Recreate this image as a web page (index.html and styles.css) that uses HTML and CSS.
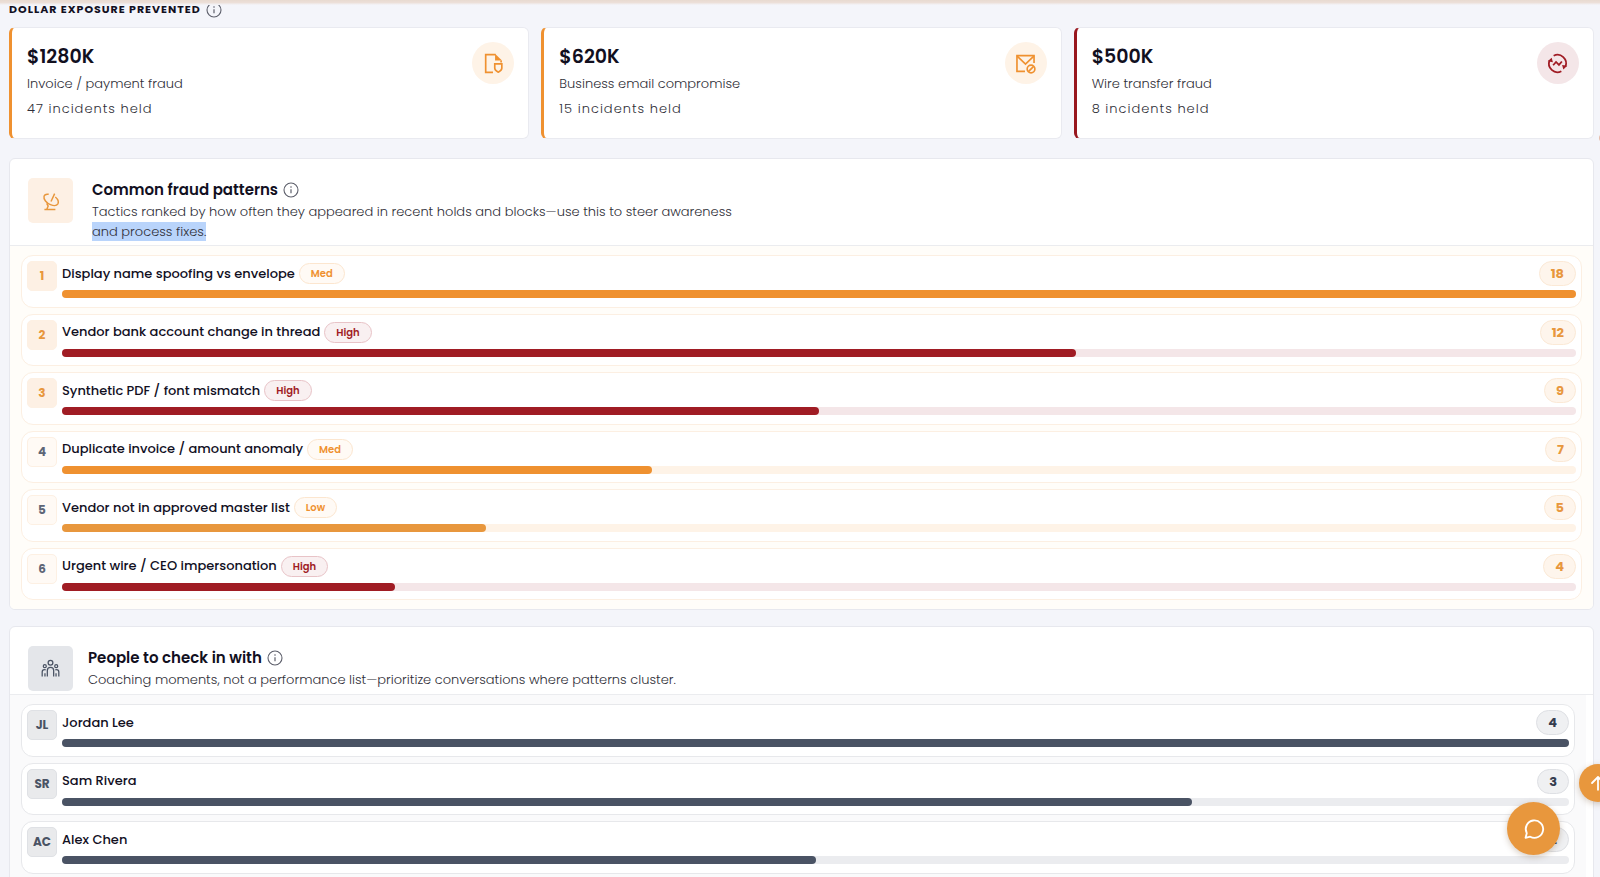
FILE: index.html
```html
<!DOCTYPE html>
<html lang="en">
<head>
<meta charset="utf-8">
<meta name="viewport" content="width=device-width, initial-scale=1">
<title>Fraud exposure</title>
<link rel="stylesheet" href="styles.css">
</head>
<body>
<svg class="sprite" aria-hidden="true">
  <symbol id="info" viewBox="0 0 16 16"><circle cx="8" cy="8" r="7" fill="none" stroke="currentColor" stroke-width="1.1"/><path d="M8 7.200v4" stroke="currentColor" stroke-width="1.200"/><circle cx="8" cy="5" r=".8" fill="currentColor"/></symbol>
</svg>
<div class="top-strip"></div>
<main class="page">
  <section class="exposure">
    <div class="heading-row">
      <h2 class="eyebrow">Dollar exposure prevented</h2>
      <button class="info" type="button" aria-label="About dollar exposure"><svg><use href="#info"/></svg></button>
    </div>
    <div class="cards">
      <article class="card">
        <div>
          <p class="amount">$1280K</p>
          <p class="label">Invoice / payment fraud</p>
          <p class="held">47 incidents held</p>
        </div>
        <span class="disc"><svg viewBox="0 0 24 24" fill="none" stroke="currentColor" stroke-width="1.6"><path d="M11.500 20.500H4.500v-17h9.500M19.300 9v2"/><path d="M13.500 2.700l6.600 6.500h-6.600z" fill="currentColor" stroke="none"/><path d="M13.200 12.300h6.800v4.300c0 1.700-1.500 2.800-3.400 3.700-1.900-.9-3.400-2-3.400-3.700z"/></svg></span>
      </article>
      <article class="card">
        <div>
          <p class="amount">$620K</p>
          <p class="label">Business email compromise</p>
          <p class="held">15 incidents held</p>
        </div>
        <span class="disc"><svg viewBox="0 0 24 24" fill="none" stroke="currentColor" stroke-width="1.6"><path d="M11.500 19.500H3.800v-15h16.400v7"/><path d="M4 5l8 7.500L20 5"/><circle cx="17.300" cy="17.300" r="3.700"/><path d="M14.800 19.800l5-5"/></svg></span>
      </article>
      <article class="card card-high">
        <div>
          <p class="amount">$500K</p>
          <p class="label">Wire transfer fraud</p>
          <p class="held">8 incidents held</p>
        </div>
        <span class="disc"><svg viewBox="0 0 24 24" fill="none" stroke="currentColor" stroke-width="1.7"><path d="M8.300 4.600A8.200 8.200 0 0 1 19.600 15"/><path d="M15.700 19.400A8.200 8.200 0 0 1 4.400 9"/><path d="M2.600 9.800l3.800-3.400 1.200 4.400zM21.400 14.200l-3.800 3.600-1.200-4.400z" fill="currentColor" stroke="none"/><path d="M7.800 13.700l2.800-3.200 2.800 2.800 2.800-3.200"/></svg></span>
      </article>
    </div>
  </section>

  <section class="panel patterns">
    <header class="panel-head">
      <span class="tile"><svg viewBox="0 0 24 24" fill="none" stroke="currentColor" stroke-width="1.6"><path d="M9.500 4.700C7 4.200 4.900 5 4.400 7c-.8 3 2.600 7.300 7 9 3.500 1.400 7 1 8.100-.9 1-1.900.2-4.900-2.800-7.500"/><path d="M12 12.500l4-8.500"/><path d="M7.300 14.500l1.600 3-1.600 3.800M4.800 21.200h12"/></svg></span>
      <div class="intro">
        <div class="heading-row"><h2 class="title">Common fraud patterns</h2><button class="info" type="button" aria-label="About common fraud patterns"><svg><use href="#info"/></svg></button></div>
        <p class="desc">Tactics ranked by how often they appeared in recent holds and blocks—use this to steer awareness <mark>and process fixes.</mark></p>
      </div>
    </header>
    <ol class="list list-six">
      <li class="row top"><span class="rank">1</span><div class="body"><div class="line"><h3 class="name">Display name spoofing vs envelope</h3><span class="chip">Med</span><span class="count">18</span></div><div class="track"><div class="fill" style="width:100%"></div></div></div></li>
      <li class="row top high"><span class="rank">2</span><div class="body"><div class="line"><h3 class="name">Vendor bank account change in thread</h3><span class="chip">High</span><span class="count">12</span></div><div class="track"><div class="fill" style="width:67%"></div></div></div></li>
      <li class="row top high"><span class="rank">3</span><div class="body"><div class="line"><h3 class="name">Synthetic PDF / font mismatch</h3><span class="chip">High</span><span class="count">9</span></div><div class="track"><div class="fill" style="width:50%"></div></div></div></li>
      <li class="row"><span class="rank">4</span><div class="body"><div class="line"><h3 class="name">Duplicate invoice / amount anomaly</h3><span class="chip">Med</span><span class="count">7</span></div><div class="track"><div class="fill" style="width:39%"></div></div></div></li>
      <li class="row low"><span class="rank">5</span><div class="body"><div class="line"><h3 class="name">Vendor not in approved master list</h3><span class="chip">Low</span><span class="count">5</span></div><div class="track"><div class="fill" style="width:28%"></div></div></div></li>
      <li class="row high"><span class="rank">6</span><div class="body"><div class="line"><h3 class="name">Urgent wire / CEO impersonation</h3><span class="chip">High</span><span class="count">4</span></div><div class="track"><div class="fill" style="width:22%"></div></div></div></li>
    </ol>
  </section>

  <section class="panel people">
    <header class="panel-head">
      <span class="tile"><svg viewBox="0 0 24 24" fill="none" stroke="currentColor" stroke-width="1.6"><circle cx="12" cy="4.800" r="3"/><circle cx="4.800" cy="9" r="1.900"/><circle cx="19.200" cy="9" r="1.900"/><path d="M8 22v-7.500c0-2.300 1.700-3.800 4-3.800s4 1.500 4 3.800V22M1.500 22v-5.500c0-1.900 1.100-3 2.800-3 .8 0 1.300.2 1.700.5M5 22v-4M22.500 22v-5.500c0-1.900-1.100-3-2.800-3-.8 0-1.300.2-1.700.5M19 22v-4"/></svg></span>
      <div class="intro">
        <div class="heading-row"><h2 class="title">People to check in with</h2><button class="info" type="button" aria-label="About people to check in with"><svg><use href="#info"/></svg></button></div>
        <p class="desc">Coaching moments, not a performance list—prioritize conversations where patterns cluster.</p>
      </div>
    </header>
    <ul class="list list-three">
      <li class="row"><span class="rank">JL</span><div class="body"><div class="line"><h3 class="name">Jordan Lee</h3><span class="count">4</span></div><div class="track"><div class="fill" style="width:100%"></div></div></div></li>
      <li class="row"><span class="rank">SR</span><div class="body"><div class="line"><h3 class="name">Sam Rivera</h3><span class="count">3</span></div><div class="track"><div class="fill" style="width:75%"></div></div></div></li>
      <li class="row"><span class="rank">AC</span><div class="body"><div class="line"><h3 class="name">Alex Chen</h3><span class="count">2</span></div><div class="track"><div class="fill" style="width:50%"></div></div></div></li>
    </ul>
  </section>
</main>
<span class="edge-dot"></span>
<button class="float to-top" type="button" aria-label="Back to top"><svg viewBox="0 0 24 24" fill="none" stroke="currentColor" stroke-width="2.400" stroke-linecap="round" stroke-linejoin="round"><path d="M12 21V4M4 12l8-8 8 8"/></svg></button>
<button class="float chat" type="button" aria-label="Open chat"><svg viewBox="0 0 24 24" fill="none" stroke="currentColor" stroke-width="2" stroke-linejoin="round"><path d="M2.800 21.600l1.300-5A9.500 9.500 0 1 1 7.800 20.400z"/></svg></button>
</body>
</html>
```
FILE: styles.css
```css
* { box-sizing: border-box; }

:root {
  --ink: #12101f;
  --muted: #2f2f38;
  --slate: #4a5364;
  --accent: #e8973d;
  --accent-bar: #ef9130;
  --accent-soft: #fef3e7;
  --high: #a01c24;
  --high-soft: #f4e6e8;
}

body {
  margin: 0;
  height: 100vh;
  overflow: hidden;
  background: #f4f5fa;
  color: var(--ink);
  font-family: Poppins, "Open Sans", "Noto Sans", sans-serif;
  font-size: 13px;
  line-height: 20px;
}

h2, h3, p, ol, ul { margin: 0; padding: 0; }
ol, ul { list-style: none; }
button { border: 0; padding: 0; background: none; cursor: pointer; }
svg { display: block; }
.sprite { display: none; }

.top-strip {
  position: fixed;
  inset: 0 0 auto;
  height: 5px;
  background: linear-gradient(#e8dad0, #ecdfd8 50%, #f4f5fa);
}

.page { padding: 0 6px 0 9px; }

.heading-row { display: flex; align-items: center; gap: 5px; }
.info { color: #5d5f6b; }
.info svg { width: 16px; height: 16px; }

.eyebrow {
  font-size: 11px;
  font-weight: 700;
  letter-spacing: 1px;
  line-height: 19px;
  text-transform: uppercase;
}

.cards {
  display: grid;
  grid-template-columns: repeat(3, 1fr);
  gap: 12px;
  margin-top: 8px;
}

.card {
  display: flex;
  justify-content: space-between;
  align-items: flex-start;
  padding: 14px 14px 14px 15px;
  background: #fff;
  border: 1px solid #e9eaf0;
  border-left: 3px solid var(--accent-bar);
  border-radius: 6px;
  min-height: 112px;
}
.card-high { border-left-color: #98171e; }

.amount { font-size: 19px; font-weight: 600; line-height: 30px; }
.label, .held { color: var(--muted); font-weight: 300; }
.label { line-height: 24px; }
.held { line-height: 26px; letter-spacing: 1px; }

.disc {
  display: grid;
  place-items: center;
  width: 42px;
  height: 42px;
  border-radius: 50%;
  background: var(--accent-soft);
  color: var(--accent-bar);
}
.card-high .disc { background: var(--high-soft); color: var(--high); }
.disc svg { width: 25px; height: 25px; }

.panel {
  margin-top: 19px;
  background: #fff;
  border: 1px solid #e7e8ee;
  border-radius: 6px;
  overflow: hidden;
}
.people { margin-top: 16px; margin-bottom: -20px; }

.panel-head {
  display: flex;
  align-items: flex-start;
  gap: 19px;
  padding: 19px 18px 3px;
  border-bottom: 1px solid #ebecef;
}
.people .panel-head { gap: 15px; }

.tile {
  display: grid;
  place-items: center;
  flex: none;
  width: 45px;
  height: 45px;
  border-radius: 5px;
  background: #fdf0e4;
  color: var(--accent);
}
.tile svg { width: 22px; height: 22px; }
.people .tile { background: #e4e6ea; color: var(--slate); }
.people .tile svg { width: 19px; height: 19px; }

.intro { max-width: 655px; }
.title { font-size: 15px; font-weight: 600; line-height: 24px; }
.desc { color: var(--muted); font-weight: 300; }
mark { background: #b9d4fb; color: inherit; }

.list {
  display: grid;
  grid-auto-rows: 1fr;
  gap: 6px;
  box-sizing: content-box;
  padding: 9px 11px;
  background: #fffdf9;
}
.list-six { min-height: 345px; }
.list-three {
  min-height: 170px;
  padding-bottom: 24px;
  background: #fafafb;
  border-right: 7px solid #fff;
}

.row {
  display: flex;
  gap: 5px;
  padding: 5px 5px 8px;
  background: #fff;
  border: 1px solid #fcefe2;
  border-radius: 12px;
}

.rank {
  display: grid;
  place-items: center;
  flex: none;
  width: 30px;
  height: 30px;
  border: 1px solid #fdf0e3;
  border-radius: 5px;
  background: #fffaf5;
  color: #5d6576;
  font-size: 12px;
  font-weight: 700;
}
.top .rank { background: #fdf0e4; color: var(--accent); }

.body { flex: 1; min-width: 0; }
.line { display: flex; align-items: center; gap: 4px; height: 25px; }
.name { font-size: 13px; font-weight: 500; }

.chip {
  padding: 0 11px;
  border: 1px solid #fce6cf;
  border-radius: 11px;
  background: #fffaf5;
  color: var(--accent-bar);
  font-size: 10px;
  font-weight: 600;
  line-height: 19px;
}
.high .chip { border-color: #e8c3c7; background: #f9f0f1; color: var(--high); }

.count {
  margin-left: auto;
  padding: 0 11px;
  border: 1px solid #fbe9d6;
  border-radius: 13px;
  background: #fef5ec;
  color: var(--accent);
  font-size: 13px;
  font-weight: 700;
  line-height: 23px;
}

.track { height: 8px; margin-top: 4px; border-radius: 4px; background: var(--accent-soft); }
.fill { height: 100%; border-radius: 4px; background: var(--accent-bar); }
.low .fill { background: var(--accent); }
.high .track { background: var(--high-soft); }
.high .fill { background: var(--high); }

.people .row { border-color: #e7e8eb; }
.people .rank { border-color: #dfe1e5; background: #e9eaec; color: var(--slate); }
.people .count { border-color: #dee0e4; background: #eff0f2; color: #343c4f; }
.people .track { background: #ebecef; }
.people .fill { background: var(--slate); }

.float {
  position: fixed;
  display: grid;
  place-items: center;
  border-radius: 50%;
  background: var(--accent);
  color: #fff;
  box-shadow: 0 2px 6px rgba(90, 50, 10, .25);
}
.to-top { right: -17px; bottom: 75px; width: 38px; height: 38px; }
.to-top svg { width: 18px; height: 18px; }
.chat { right: 40px; bottom: 22px; width: 53px; height: 53px; }
.chat svg { width: 22px; height: 22px; }

.edge-dot {
  position: fixed;
  top: 133px;
  right: -9px;
  width: 10px;
  height: 10px;
  border-radius: 50%;
  background: #e5b9a5;
}
```
